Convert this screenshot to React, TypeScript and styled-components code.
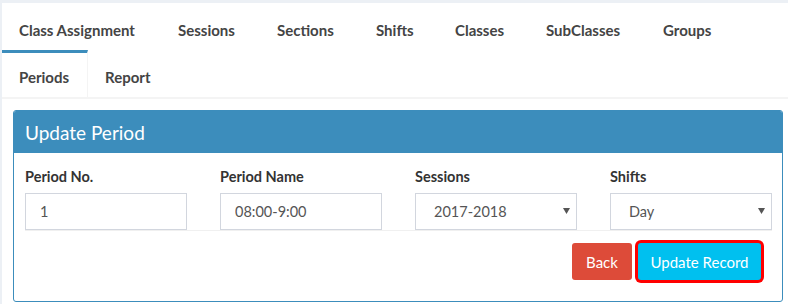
import { FC } from 'react';
import styled, { createGlobalStyle } from 'styled-components';

const GlobalStyle = createGlobalStyle`
  html, body {
    margin: 0;
    padding: 0;
    background: #ecf0f5;
    font-family: Lato, "Open Sans", sans-serif;
    color: #333;
  }
  body {
    padding: 3px 0 0 2px;
    height: 304px;
    overflow: hidden;
    box-sizing: border-box;
  }
`;

const Panel = styled.div`
  background: #fff;
  height: 301px;
`;

const TabBar = styled.ul`
  list-style: none;
  margin: 0;
  padding: 0;
  display: flex;
  flex-wrap: wrap;
  border-bottom: 2px solid #f4f4f4;
`;

const Tab = styled.li<{ $active?: boolean; $w: number }>`
  box-sizing: border-box;
  width: ${(p) => p.$w}px;
  height: 47px;
  padding: 14px 17px 0 17px;
  border-top: 3px solid ${(p) => (p.$active ? '#3c8dbc' : 'transparent')};
  border-right: 1px solid ${(p) => (p.$active ? '#f4f4f4' : 'transparent')};
  font-size: 15px;
  font-weight: 700;
  line-height: 21px;
  color: #444;
  white-space: nowrap;
  cursor: pointer;
`;

const TabContent = styled.div`
  padding: 11px 5px 0 11px;
`;

const Box = styled.section`
  border: 1px solid #3c8dbc;
  border-radius: 3px;
  height: 192px;
  box-sizing: border-box;
  overflow: hidden;
`;

const BoxHeader = styled.header`
  background: #3c8dbc;
  height: 42px;
  padding: 0 11px;
  display: flex;
  align-items: center;
`;

const BoxTitle = styled.h3`
  margin: 0;
  color: #fff;
  font-size: 19px;
  font-weight: 400;
`;

const BoxBody = styled.div`
  padding: 15px 10px 0 11px;
`;

const FieldRow = styled.div`
  display: grid;
  grid-template-columns: repeat(4, 195px);
  width: 747px;
  border-bottom: 1px solid #f0f0f0;
`;

const Field = styled.div`
  display: flex;
  flex-direction: column;
  gap: 7px;
`;

const Label = styled.label`
  font-size: 14.5px;
  font-weight: 700;
  line-height: 18px;
  color: #333;
`;

const Input = styled.input`
  box-sizing: border-box;
  width: 162px;
  height: 37px;
  padding: 0 14px;
  border: 1px solid #d2d6de;
  border-radius: 0;
  font-family: Lato, "Open Sans", sans-serif;
  font-size: 14.5px;
  color: #555;
  outline: none;
`;

const SelectWrap = styled.div`
  position: relative;
  width: 162px;
`;

const Select = styled.select`
  box-sizing: border-box;
  appearance: none;
  width: 162px;
  height: 37px;
  padding: 0 18px;
  border: 1px solid #d2d6de;
  border-radius: 0;
  background: #fff;
  font-family: Lato, "Open Sans", sans-serif;
  font-size: 14.5px;
  color: #555;
  outline: none;
`;

const Caret = styled.svg`
  position: absolute;
  right: 7px;
  top: 15px;
  pointer-events: none;
`;

const Actions = styled.div`
  box-sizing: border-box;
  display: flex;
  justify-content: flex-end;
  gap: 6px;
  padding: 12px 11px 0 0;
  width: 747px;
`;

const Button = styled.button<{ $tone: 'danger' | 'info'; $focus?: boolean }>`
  box-sizing: border-box;
  width: ${(p) => (p.$tone === 'info' ? 123 : 60)}px;
  height: 37px;
  padding: 0;
  border: none;
  border-radius: 3px;
  background: ${(p) => (p.$tone === 'danger' ? '#dd4b39' : '#00c0ef')};
  color: #fff;
  font-family: Lato, "Open Sans", sans-serif;
  font-size: 15px;
  cursor: pointer;
  box-shadow: ${(p) => (p.$focus ? '0 0 0 3px #ff0000' : 'none')};
`;

const tabs = [
  { label: 'Class Assignment', w: 159 },
  { label: 'Sessions', w: 99 },
  { label: 'Sections', w: 99 },
  { label: 'Shifts', w: 79 },
  { label: 'Classes', w: 91 },
  { label: 'SubClasses', w: 117 },
  { label: 'Groups', w: 120 },
  { label: 'Periods', w: 86, active: true },
  { label: 'Report', w: 90 },
];

const DropCaret = () => (
  <Caret width="7" height="6" viewBox="0 0 7 6">
    <path d="M0 0 L7 0 L3.5 6 Z" fill="#555" />
  </Caret>
);

const App: FC = () => (
  <>
    <GlobalStyle />
    <Panel>
      <TabBar>
        {tabs.map((t) => (
          <Tab key={t.label} $w={t.w} $active={t.active}>
            {t.label}
          </Tab>
        ))}
      </TabBar>
      <TabContent>
        <Box>
          <BoxHeader>
            <BoxTitle>Update Period</BoxTitle>
          </BoxHeader>
          <BoxBody>
            <FieldRow>
              <Field>
                <Label>Period No.</Label>
                <Input defaultValue="1" />
              </Field>
              <Field>
                <Label>Period Name</Label>
                <Input defaultValue="08:00-9:00" />
              </Field>
              <Field>
                <Label>Sessions</Label>
                <SelectWrap>
                  <Select defaultValue="2017-2018">
                    <option>2017-2018</option>
                  </Select>
                  <DropCaret />
                </SelectWrap>
              </Field>
              <Field>
                <Label>Shifts</Label>
                <SelectWrap>
                  <Select defaultValue="Day">
                    <option>Day</option>
                  </Select>
                  <DropCaret />
                </SelectWrap>
              </Field>
            </FieldRow>
            <Actions>
              <Button $tone="danger">Back</Button>
              <Button $tone="info" $focus>
                Update Record
              </Button>
            </Actions>
          </BoxBody>
        </Box>
      </TabContent>
    </Panel>
  </>
);

export default App;
